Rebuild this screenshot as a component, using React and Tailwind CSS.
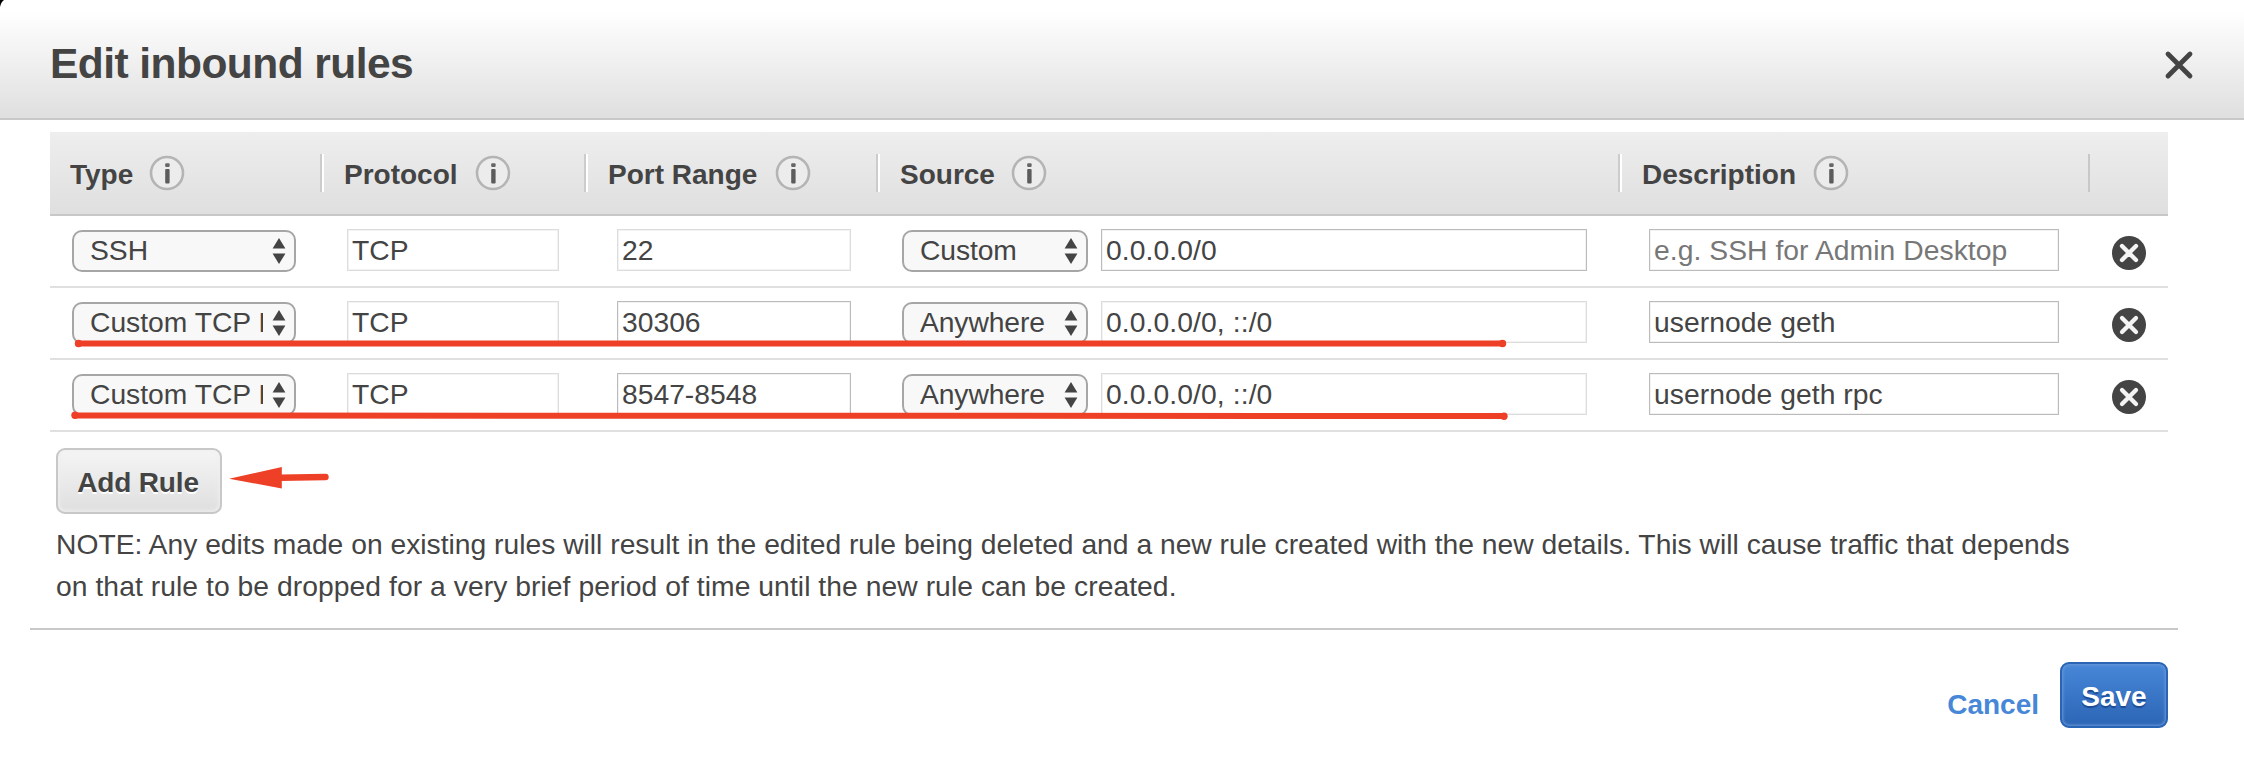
function InfoIcon() {
  return (
    <svg className="h-9 w-9 shrink-0" viewBox="0 0 36 36" fill="none">
      <circle cx="18" cy="18" r="16" stroke="#b4b4b4" strokeWidth="2.6" fill="#ececec" />
      <rect x="16.2" y="8.2" width="4.4" height="3.8" rx="1" fill="#666" />
      <rect x="16.2" y="14" width="4.4" height="14.6" rx="1" fill="#5c5c5c" />
    </svg>
  );
}

function HeadCell({ label, width, gap, first }) {
  return (
    <div className={`flex h-full shrink-0 items-center ${width}`}>
      {!first && <div className="h-[38px] w-1 shrink-0 border-l-2 border-[#ccc] bg-white" />}
      <div className={`flex items-center pl-5 ${gap}`}>
        <span className="pt-[3px]">{label}</span>
        <InfoIcon />
      </div>
    </div>
  );
}

function Select({ value, width }) {
  return (
    <div
      className={`mt-px flex h-[42px] shrink-0 items-center rounded-[10px] border-2 border-[#a6a6a6] bg-[#f8f8f8] pr-2 pl-4 ${width}`}
    >
      <span className="min-w-0 flex-1 overflow-hidden pb-0.5 whitespace-nowrap">{value}</span>
      <svg className="ml-[9px] h-[26px] w-[14px] shrink-0" viewBox="0 0 14 26" fill="#444">
        <path d="M7 0 L13.4 10.6 H0.6 Z" />
        <path d="M7 26 L13.4 15.6 H0.6 Z" />
      </svg>
    </div>
  );
}

function Field({ value, width, strong, placeholder }) {
  return (
    <div
      className={`flex h-[42px] shrink-0 items-center border bg-white pb-px pl-1 whitespace-nowrap shadow-[inset_0_0_0_1px_#f2f2f2] ${width} ${
        strong ? "border-[#bbb]" : "border-[#ddd]"
      } ${placeholder ? "text-[#777]" : ""}`}
    >
      {value}
    </div>
  );
}

function DeleteIcon() {
  return (
    <svg className="mt-[6px] h-9 w-9 shrink-0" viewBox="0 0 36 36" fill="none">
      <circle cx="18" cy="18" r="17" fill="#444" />
      <path d="M11 11 L25 25 M25 11 L11 25" stroke="#f4f4f4" strokeWidth="4.3" strokeLinecap="round" />
    </svg>
  );
}

const rules = [
  { type: "SSH", port: "22", portStrong: false, source: "Custom", cidr: "0.0.0.0/0", cidrStrong: true, desc: "e.g. SSH for Admin Desktop", empty: true },
  { type: "Custom TCP Rule", port: "30306", portStrong: true, source: "Anywhere", cidr: "0.0.0.0/0, ::/0", cidrStrong: false, desc: "usernode geth" },
  { type: "Custom TCP Rule", port: "8547-8548", portStrong: true, source: "Anywhere", cidr: "0.0.0.0/0, ::/0", cidrStrong: false, desc: "usernode geth rpc" },
];

function RuleRow({ rule }) {
  return (
    <div className="flex h-[72px] items-start border-b-2 border-[#e0e0e0] pt-[13px] pl-[22px]">
      <Select value={rule.type} width="w-[224px]" />
      <Field value="TCP" width="ml-[51px] w-[212px]" />
      <Field value={rule.port} width="ml-[58px] w-[234px]" strong={rule.portStrong} />
      <Select value={rule.source} width="ml-[51px] w-[186px] tracking-[-0.1px]" />
      <Field value={rule.cidr} width="ml-[13px] w-[486px] tracking-[0.1px]" strong={rule.cidrStrong} />
      <Field value={rule.desc} width="ml-[62px] w-[410px] tracking-[0.06px]" strong placeholder={rule.empty} />
      <div className="ml-[52px]">
        <DeleteIcon />
      </div>
    </div>
  );
}

function Annotations() {
  return (
    <svg className="pointer-events-none absolute top-0 left-0 h-[766px] w-[2244px]" viewBox="0 0 2244 766" fill="none">
      <path d="M0 0 H4 Q1 2 0 7 Z" fill="#000" />
      <g stroke="#ee4026" strokeLinecap="round">
        <path d="M78 343.5 H1503" strokeWidth="6" />
        <path d="M75 415.5 L1504 416" strokeWidth="6" />
        <path d="M280 477.8 L325.5 477" strokeWidth="6.4" />
      </g>
      <g fill="#ee4026">
        <circle cx="78.5" cy="343.5" r="3.7" />
        <circle cx="1502.5" cy="343.5" r="3.7" />
        <circle cx="75" cy="415.3" r="3.7" />
        <circle cx="1504" cy="416.2" r="3.7" />
        <path d="M229 478.8 L281.8 467 V488.4 Z" />
      </g>
    </svg>
  );
}

export default function App() {
  return (
    <div className="relative h-[766px] w-[2244px] overflow-hidden bg-white font-['Liberation_Sans',Arial,sans-serif] text-[28.26px] leading-[42px] text-[#444]">
      <header className="flex h-[120px] items-center justify-between border-b-2 border-[#c8c8c8] bg-linear-to-b from-white from-10% to-[#dfdfdf] pr-[50px] pl-[50px]">
        <h1 className="pt-2.5 text-[42.5px] leading-[50px] font-bold tracking-[-0.55px]">Edit inbound rules</h1>
        <svg className="mt-3 h-[30px] w-[30px]" viewBox="0 0 30 30" fill="none">
          <path d="M4 4 L26 26 M26 4 L4 26" stroke="#444" strokeWidth="4.8" strokeLinecap="round" />
        </svg>
      </header>

      <main className="mt-3 ml-[50px] w-[2118px]">
        <div className="flex h-[84px] items-center border-b-2 border-[#c8c8c8] bg-linear-to-b from-[#eee] to-[#dfdfdf] text-[28px] font-bold">
          <HeadCell label="Type" width="w-[270px]" gap="gap-4" first />
          <HeadCell label="Protocol" width="w-[264px]" gap="gap-[17px]" />
          <HeadCell label="Port Range" width="w-[292px]" gap="gap-[18px]" />
          <HeadCell label="Source" width="w-[742px]" gap="gap-4" />
          <HeadCell label="Description" width="w-[470px]" gap="gap-[17px]" />
          <div className="h-[38px] w-0.5 bg-[#c8c8c8]" />
        </div>
        {rules.map((rule, i) => (
          <RuleRow key={i} rule={rule} />
        ))}
        <div className="pl-1.5">
          <button className="mt-4 flex h-[66px] w-[166px] items-center justify-center rounded-[9px] border-2 border-[#c8c8c8] bg-linear-to-b from-[#f5f5f5] to-[#dfdfdf] pt-1 pr-0.5 text-[28px] font-bold tracking-[-0.15px] shadow-[inset_0_0_4px_1px_#f0f0f0] [text-shadow:0_2px_0_#fff]">
            Add Rule
          </button>
          <p className="mt-[9px] whitespace-nowrap">
            NOTE: Any edits made on existing rules will result in the edited rule being deleted and a new rule created with the new details. This will cause traffic that depends
            <br />
            <span className="tracking-[0.06px]">on that rule to be dropped for a very brief period of time until the new rule can be created.</span>
          </p>
        </div>
      </main>

      <footer className="mt-[21px] ml-[30px] flex w-[2148px] items-start justify-end border-t-2 border-[#c8c8c8] pt-8 pr-2.5 text-[28px] font-bold">
        <span className="mt-[22px] text-[#4687d7]">Cancel</span>
        <button className="ml-[21px] flex h-[66px] w-[108px] items-center justify-center rounded-[9px] border-2 border-[#2a64b5] bg-linear-to-b from-[#4787d8] to-[#2c65b5] pt-[3px] text-white shadow-[inset_0_0_3px_1px_#6b9ad8] [text-shadow:0_2px_1px_#1c4a94]">
          Save
        </button>
      </footer>
      <Annotations />
    </div>
  );
}
